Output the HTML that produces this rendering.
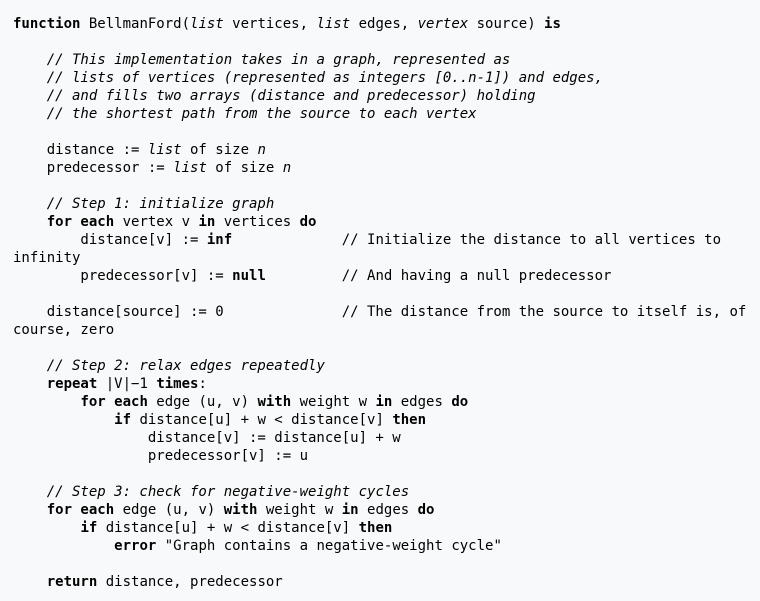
<!DOCTYPE html>
<html><head><meta charset="utf-8"><style>
html,body{margin:0;padding:0;background:#f8f9fa;width:760px;height:601px;overflow:hidden}
pre{margin:0;padding:15px 13px 0;font-family:"DejaVu Sans Mono",monospace;font-size:14px;line-height:18px;color:#000;white-space:pre}
i{font-style:italic}
</style></head><body><pre><b>function</b> BellmanFord(<i>list</i> vertices, <i>list</i> edges, <i>vertex</i> source) <b>is</b>

    <i>// This implementation takes in a graph, represented as</i>
    <i>// lists of vertices (represented as integers [0..n-1]) and edges,</i>
    <i>// and fills two arrays (distance and predecessor) holding</i>
    <i>// the shortest path from the source to each vertex</i>

    distance := <i>list</i> of size <i>n</i>
    predecessor := <i>list</i> of size <i>n</i>

    <i>// Step 1: initialize graph</i>
    <b>for each</b> vertex v <b>in</b> vertices <b>do</b>
        distance[v] := <b>inf</b>             // Initialize the distance to all vertices to
infinity
        predecessor[v] := <b>null</b>         // And having a null predecessor

    distance[source] := 0              // The distance from the source to itself is, of
course, zero

    <i>// Step 2: relax edges repeatedly</i>
    <b>repeat</b> |V|−1 <b>times</b>:
        <b>for each</b> edge (u, v) <b>with</b> weight w <b>in</b> edges <b>do</b>
            <b>if</b> distance[u] + w &lt; distance[v] <b>then</b>
                distance[v] := distance[u] + w
                predecessor[v] := u

    <i>// Step 3: check for negative-weight cycles</i>
    <b>for each</b> edge (u, v) <b>with</b> weight w <b>in</b> edges <b>do</b>
        <b>if</b> distance[u] + w &lt; distance[v] <b>then</b>
            <b>error</b> "Graph contains a negative-weight cycle"

    <b>return</b> distance, predecessor</pre></body></html>
